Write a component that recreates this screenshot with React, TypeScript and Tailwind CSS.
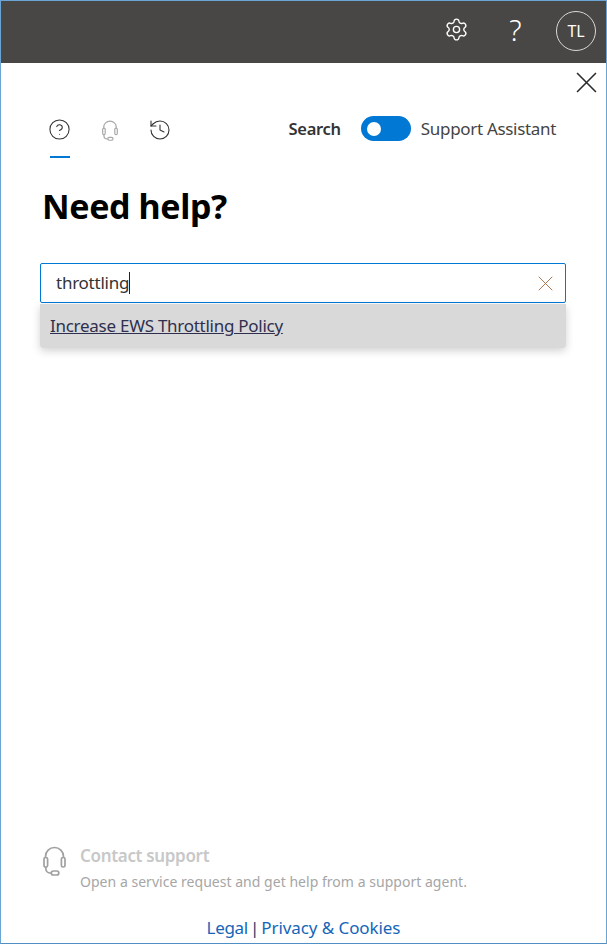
import { CircleHelp, History, Settings } from "lucide-react";

const font = "font-['Noto_Sans','Open_Sans',sans-serif]";

function Cross({ size, width, className }: { size: number; width: number; className: string }) {
  return (
    <svg width={size} height={size} viewBox="0 0 20 20" className={className} fill="none" stroke="currentColor" strokeWidth={width}>
      <path d="M1 1 19 19M19 1 1 19" />
    </svg>
  );
}

function HeadsetIcon({ w, h, className }: { w: number; h: number; className: string }) {
  return (
    <svg width={w} height={h} viewBox="0 0 23 30" className={className} fill="none" stroke="currentColor" strokeWidth={1.7}>
      <path d="M2.5 12V10.5a9 9 0 0 1 18 0V12" />
      <rect x="1" y="11.5" width="3.6" height="9.5" rx="1.6" />
      <rect x="18.4" y="11.5" width="3.6" height="9.5" rx="1.6" />
      <path d="M2.8 21v1.5a4.5 4.5 0 0 0 4.5 4.5h1" />
      <rect x="8.3" y="25" width="7.5" height="4" rx="2" />
    </svg>
  );
}

export default function App() {
  return (
    <div className={`${font} flex h-[944px] w-[607px] flex-col overflow-hidden border border-[#6aa5d6] border-b-[#4f8fc4] bg-white`}>
      <header className="flex h-[62px] shrink-0 items-center justify-end bg-[#494745] pr-[10px] pb-[2px] text-white">
        <Settings size={25} strokeWidth={1.3} className="mb-[3px]" />
        <span className="mb-[3px] ml-[36px] w-[21px] text-center text-[29px] leading-none font-light">?</span>
        <div className="ml-[30px] flex h-[40px] w-[40px] items-center justify-center rounded-full border border-[#d8d8d8] text-[16px] tracking-[-0.2px]">
          TL
        </div>
      </header>

      <div className="flex h-[40px] shrink-0 items-start justify-end pt-[9px] pr-[9px]">
        <Cross size={21} width={1.5} className="text-[#2b2b2b]" />
      </div>

      <div className="flex h-[55px] shrink-0 items-start pr-[50px] pl-[49px]">
        <div className="flex flex-col items-center">
          <div className="flex h-[53px] w-[20px] items-start justify-center pt-[15px]">
            <CircleHelp size={23} strokeWidth={1.1} className="mr-[1px] shrink-0 text-[#333]" />
          </div>
          <div className="h-[2px] w-[20px] bg-[#0078d4]" />
        </div>
        <HeadsetIcon w={16} h={21} className="mt-[17px] ml-[32px] text-[#a8a8a8]" />
        <History size={24} strokeWidth={1.1} className="mt-[15px] ml-[30px] text-[#333]" />
        <div className="mt-[13px] ml-auto flex h-[25px] items-center">
          <span className="pt-[2px] text-[16.5px] tracking-[-0.3px] font-semibold text-[#333]">Search</span>
          <div className="ml-[20px] flex h-[25px] w-[50px] items-center rounded-full bg-[#0078d4] pl-[6px]">
            <div className="h-[14px] w-[14px] rounded-full bg-white" />
          </div>
          <span className="ml-[10px] text-[17px] tracking-[-0.32px] text-[#444]">Support Assistant</span>
        </div>
      </div>

      <h1 className="ml-[41px] h-[105px] shrink-0 pt-[24px] text-[34px] leading-[48px] tracking-[-0.4px] font-bold text-black">Need help?</h1>

      <div className="mr-[40px] ml-[39px] flex h-[40px] shrink-0 items-center rounded-[2px] border border-[#0078d4] pr-[12px] pl-[15px]">
        <span className="text-[17px] tracking-[-0.25px] text-[#333]">throttling</span>
        <span className="h-[22px] w-px bg-[#222]" />
        <Cross size={15} width={1.2} className="ml-[auto] text-[#a5683a]" />
      </div>

      <div className="mt-px mr-[40px] ml-[39px] flex h-[44px] shrink-0 items-center rounded-b-[4px] bg-[#d9d9d9] pl-[10px] shadow-[0_3px_8px_rgba(0,0,0,0.18)]">
        <a className="text-[17px] tracking-[-0.27px] text-[#2f2f4f] underline">Increase EWS Throttling Policy</a>
      </div>

      <div className="mt-auto ml-[42px] flex">
        <HeadsetIcon w={23} h={30} className="mt-[1px] text-[#a0a0a0]" />
        <div className="ml-[14px]">
          <div className="text-[17px] leading-[22px] tracking-[-0.33px] font-semibold text-[#c8c8c8]">Contact support</div>
          <div className="mt-[5px] text-[14px] leading-[20px] tracking-[0.03px] text-[#a6a6a6]">
            Open a service request and get help from a support agent.
          </div>
        </div>
      </div>

      <div className="mt-[24px] mb-[3px] flex justify-center text-[17px] leading-[24px] text-[#1565b8]">
        <span className="tracking-[-0.3px]">Legal</span>
        <span className="mx-[2px] text-[#1b3a6b]">|</span>
        <span className="tracking-[-0.08px]">Privacy &amp; Cookies</span>
      </div>
    </div>
  );
}
